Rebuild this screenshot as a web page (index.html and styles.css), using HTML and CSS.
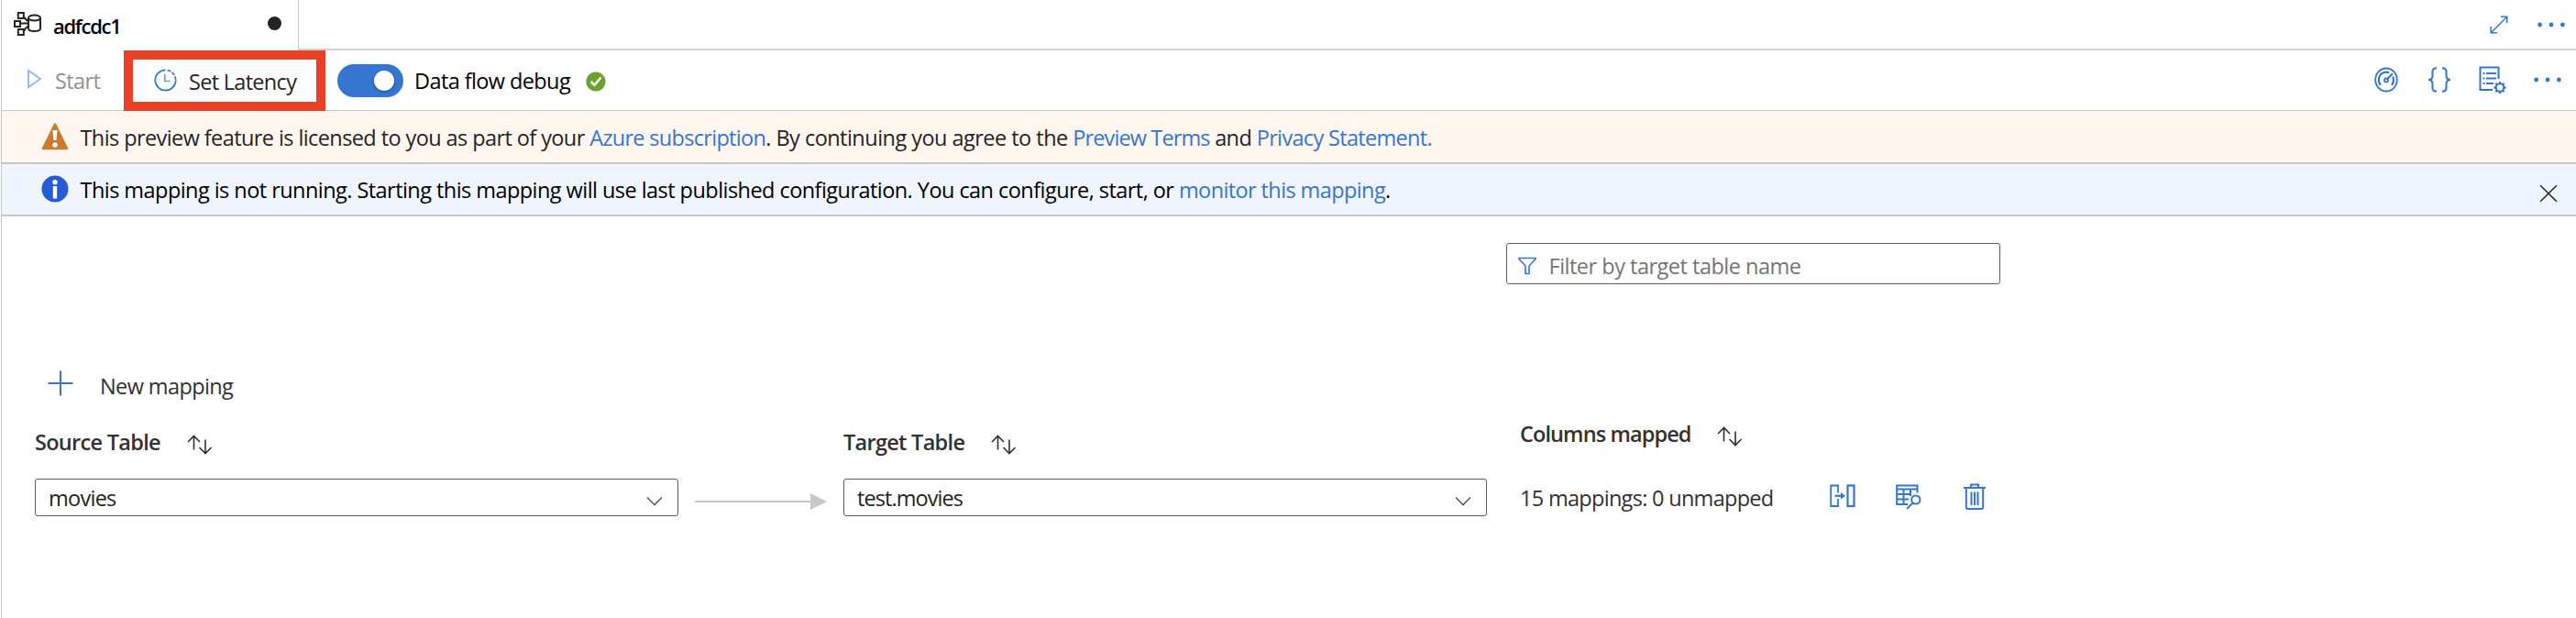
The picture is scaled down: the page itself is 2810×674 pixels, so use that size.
FILE: index.html
```html
<!DOCTYPE html>
<html lang="en">
<head>
<meta charset="utf-8">
<title>adfcdc1</title>
<link rel="stylesheet" href="styles.css">
</head>
<body>
<div class="app">
  <header class="tabs">
    <div class="tab">
      <svg class="tab-icon" width="30" height="28" viewBox="0 0 30 28" fill="none" stroke="#252423" stroke-width="2"><rect x="4.800" y="2" width="6" height="6"/><rect x="1" y="11" width="6" height="6"/><rect x="4.800" y="20" width="6" height="6"/><path d="M11 6.500C14 10 15 11 16 11M7 13.500H15M11 22C13 18 14 17 16 17"/><path d="M16 8V19C16 23 29 23 29 19V8"/><ellipse cx="22.500" cy="7.500" rx="6.500" ry="3"/></svg>
      <span class="t tab-name">adfcdc1</span>
      <span class="dirty"></span>
    </div>
    <div class="tab-tools">
      <svg width="20" height="20" viewBox="0 0 20 20" fill="none" stroke="#3476d0" stroke-width="1.500"><path d="M1.500 18.500L18.500 1.500M12 1.200H18.800V8M1.200 12V18.800H8"/></svg>
      <svg width="30" height="6" viewBox="0 0 30 6" fill="#3476d0"><circle cx="2.600" cy="3" r="2.400"/><circle cx="15" cy="3" r="2.400"/><circle cx="27.400" cy="3" r="2.400"/></svg>
    </div>
  </header>

  <div class="toolbar">
    <svg class="play" width="17" height="22" viewBox="0 0 17 22" fill="none" stroke="#98bbe9" stroke-width="2"><path d="M2 2V20L15 11Z"/></svg>
    <span class="t start">Start</span>
    <div class="latency">
      <svg width="25" height="25" viewBox="0 0 25 25" fill="none" stroke="#3476d0" stroke-width="1.700"><path d="M12.500 1.300A11.200 11.200 0 1 0 23.700 12.500"/><path d="M14.500 1.500A11.200 11.200 0 0 1 23.700 12.500" stroke-dasharray="4 1.600"/><path d="M11.800 6V13.500H17.500" stroke="#6e9fdf"/></svg>
      <span class="t set">Set Latency</span>
    </div>
    <span class="toggle"><span class="knob"></span></span>
    <span class="t debug">Data flow debug</span>
    <svg class="ok" width="22" height="22" viewBox="0 0 22 22"><circle cx="11" cy="11" r="10.600" fill="#6aa22e"/><path d="M5.500 11L9.500 14.800L16.500 6.500" fill="none" stroke="#fff" stroke-width="2.500"/></svg>
    <div class="tools">
      <svg class="gauge" width="26" height="28" viewBox="0 0 26 28" fill="none" stroke="#3476d0" stroke-width="1.800"><ellipse cx="13" cy="14" rx="11.800" ry="12.500"/><path d="M7 19.800C3 15 5 8 10 6.300C12 5.500 14 5.500 16 6.300M20.300 10.500C21.500 14 21 17 19 19.800" stroke-width="2.200"/><circle cx="13" cy="14.500" r="2"/><path d="M14.500 12.800L20 7.300" stroke-width="2.200"/></svg>
      <svg width="26" height="28" viewBox="0 0 26 28" fill="none" stroke="#3476d0" stroke-width="2"><path d="M10 1.200C6.500 1.200 5.500 2.500 5.500 5V9.500C5.500 12.500 4 14 1 14C4 14 5.500 15.500 5.500 18.500V23C5.500 25.500 6.500 26.800 10 26.800M16 1.200C19.500 1.200 20.500 2.500 20.500 5V9.500C20.500 12.500 22 14 25 14C22 14 20.500 15.500 20.500 18.500V23C20.500 25.500 19.500 26.800 16 26.800"/></svg>
      <svg width="30" height="30" viewBox="0 0 30 30" fill="none" stroke="#3476d0" stroke-width="2"><path d="M21.500 14V1.500H1.500V26H15"/><path d="M4.500 8H6.500M8 8H19M4.500 13.500H6.500M8 13.500H19M4.500 19H6.500M8 19H16"/><circle cx="23" cy="23.500" r="4.200"/><path d="M23 17V19.300M23 27.700V30M16.500 23.500H18.800M27.200 23.500H29.500M18.400 18.900L20 20.500M26 26.500L27.600 28.100M18.400 28.100L20 26.500M26 20.500L27.600 18.900" stroke-width="2.400"/></svg>
      <svg width="30" height="6" viewBox="0 0 30 6" fill="#3476d0"><circle cx="2.600" cy="3" r="2.400"/><circle cx="15" cy="3" r="2.400"/><circle cx="27.400" cy="3" r="2.400"/></svg>
    </div>
  </div>

  <div class="banner warning">
    <svg class="sign" width="30" height="30" viewBox="0 0 30 30"><path d="M15 1.500L28 28H2Z" fill="#cb7a2d" stroke="#cb7a2d" stroke-width="2.500" stroke-linejoin="round"/><path d="M12.400 8H17.600L16.500 19H13.500Z" fill="#fff"/><circle cx="15" cy="24" r="2.700" fill="#fff"/></svg>
    <p class="msg"><span class="t w1">This preview feature is licensed to you as part of your </span><a class="t w2">Azure subscription</a><span class="t w3">. By continuing you agree to the </span><a class="t w4">Preview Terms</a><span class="t w5"> and </span><a class="t w6">Privacy Statement.</a></p>
  </div>
  <div class="banner info">
    <svg class="sign" width="30" height="30" viewBox="0 0 30 30"><circle cx="15" cy="15" r="14.500" fill="#265cd3"/><circle cx="15" cy="7.700" r="2.700" fill="#fff"/><rect x="12.800" y="12" width="4.400" height="13.500" fill="#fff"/></svg>
    <p class="msg"><span class="t i1">This mapping is not running. Starting this mapping will use last published configuration. You can configure, start, or </span><a class="t i2">monitor this mapping</a><span class="t i3">.</span></p>
    <svg class="close" width="20" height="20" viewBox="0 0 20 20" fill="none" stroke="#252423" stroke-width="1.500"><path d="M1.200 1.200L18.800 18.800M18.800 1.200L1.200 18.800"/></svg>
  </div>

  <main class="content">
    <div class="filter">
      <svg width="20" height="20" viewBox="0 0 20 20" fill="none" stroke="#3476d0" stroke-width="1.600"><path d="M1 1.500H19V2.500L12 10V18.500H8V10L1 2.500Z"/></svg>
      <span class="t ph">Filter by target table name</span>
    </div>
    <div class="new">
      <svg class="plus" width="28" height="28" viewBox="0 0 28 28" fill="none" stroke="#3476d0" stroke-width="2"><path d="M14 .5V27.500M.5 14H27.500"/></svg>
      <span class="t newt">New mapping</span>
    </div>
    <div class="grid">
      <div class="head"><span class="t h1">Source Table</span><svg class="sort" width="28" height="22" viewBox="0 0 28 22"><path d="M7.500 1.500V16.500M1 8L7.500 1.500L14 8M20 5.500V20.500M13.500 14L20 20.500L26.500 14"/></svg></div>
      <div></div>
      <div class="head"><span class="t h2">Target Table</span><svg class="sort" width="28" height="22" viewBox="0 0 28 22"><path d="M7.500 1.500V16.500M1 8L7.500 1.500L14 8M20 5.500V20.500M13.500 14L20 20.500L26.500 14"/></svg></div>
      <div class="head mapped"><span class="t h3">Columns mapped</span><svg class="sort" width="28" height="22" viewBox="0 0 28 22"><path d="M7.500 1.500V16.500M1 8L7.500 1.500L14 8M20 5.500V20.500M13.500 14L20 20.500L26.500 14"/></svg></div>
      <div class="select"><span class="t s1">movies</span><svg class="chevron" width="18" height="11" viewBox="0 0 18 11"><path d="M1 1.500L9 9.500L17 1.500"/></svg></div>
      <div class="link"><svg width="144" height="18" viewBox="0 0 144 18" fill="#c8c8c8"><path d="M0 8H126V0L144 9L126 18V10H0Z"/></svg></div>
      <div class="select"><span class="t s2">test.movies</span><svg class="chevron" width="18" height="11" viewBox="0 0 18 11"><path d="M1 1.500L9 9.500L17 1.500"/></svg></div>
      <div class="actions">
        <span class="t count">15 mappings: 0 unmapped</span>
        <svg class="a1" width="28" height="26" viewBox="0 0 28 26" fill="none" stroke="#3476d0" stroke-width="1.800"><path d="M9 9.500V1.500H1.200V24H9V16"/><rect x="19.500" y="1.500" width="7" height="22.500" stroke-width="2.200"/><path d="M5.500 12.800H15" stroke-width="2.200"/><path d="M12 9L17 12.800L12 16.500Z" fill="#3476d0" stroke="none"/></svg>
        <svg class="a2" width="28" height="28" viewBox="0 0 28 28" fill="none" stroke="#3476d0" stroke-width="2"><path d="M23.500 9.500V1.500H1.200V22H13M1.200 5.500H24M1.200 11H17M1.200 16.500H14M8.500 5.500V22M16 5.500V13"/><circle cx="21.800" cy="17" r="4.600"/><path d="M18.500 20.500L12 27"/></svg>
        <svg class="a3" width="24" height="30" viewBox="0 0 24 30" fill="none" stroke="#3476d0" stroke-width="2"><path d="M0 5H24M8 5V1.500H16V5M2.800 5V26Q2.800 28 4.800 28H19.200Q21.200 28 21.200 26V5M8.500 9.500V24M12 9.500V24M15.500 9.500V24"/></svg>
      </div>
    </div>
  </main>
</div>
</body>
</html>
```
FILE: styles.css
```css
* { box-sizing: border-box; }
body { margin: 0; background: #fff; color: #323130; font: 23.5px/32px "Open Sans", "Noto Sans", sans-serif; }
svg { display: block; flex: none; }
.t { white-space: pre; letter-spacing: -.6px; }
.app { height: 674px; margin-left: 1px; border-left: 1px solid #c8c8c8; }

.tabs { display: flex; height: 55px; }
.tab { display: flex; align-items: flex-start; width: 324px; padding: 12px 0 0 13px; border-right: 1px solid #c8c8c8; color: #000; }
.tab-name { margin: 0 0 0 13px; font-size: 22px; font-weight: 600; letter-spacing: -1.3px; }
.dirty { width: 15px; height: 15px; margin: 6px 18px 0 auto; border-radius: 50%; background: #252423; }
.tab-tools { display: flex; flex: 1; justify-content: flex-end; align-items: center; gap: 32px; padding-right: 12px; border-bottom: 2px solid #d2d2d2; }

.toolbar { display: flex; align-items: center; height: 66px; border-bottom: 1px solid #c8c8c8; }
.play { margin: -3px 0 0 27px; }
.start { width: 60px; margin: 1px 0 0 14px; color: #929292; }
.latency { display: flex; align-items: center; gap: 13px; width: 220px; height: 66px; margin: -1px 0 -1px 15px; padding-left: 23px; border: 10px solid #eb4026; color: #252423; }
.set { margin-top: 2px; letter-spacing: -.7px; }
.toggle { width: 72px; height: 36px; margin-left: 13px; padding: 7px 10px; border-radius: 18px; background: #3476d0; }
.knob { display: block; width: 22px; height: 22px; margin-left: auto; border-radius: 50%; background: #fff; box-shadow: 0 1px 3px rgba(0,0,0,.4); }
.debug { width: 185px; margin: 1px 0 0 12px; color: #000; }
.ok { margin: 2px 0 0 2px; }
.tools { display: flex; align-items: center; gap: 30px; margin: -2px 0 0 auto; padding-right: 16px; }
.gauge { margin-right: 2px; }

.banner { display: flex; align-items: center; height: 58px; padding-left: 43px; border-bottom: 2px solid #c8c8c8; }
.sign { margin-top: -1px; }
.warning { background: #fff6f0; color: #252423; }
.info { height: 57px; background: #f0f5fd; color: #000; }
.msg { margin: 1px 0 0 12.5px; white-space: pre; }
.warning .msg { margin-top: 2px; }
.banner a { color: #3476d0; }
.w1 { letter-spacing: -.59px; }
.w2 { letter-spacing: -.69px; }
.w3 { letter-spacing: -.53px; }
.w4 { letter-spacing: -.88px; }
.w6 { letter-spacing: -.67px; }
.i1 { letter-spacing: -.55px; }
.close { margin: 9px 20px 0 auto; }

.filter { display: flex; align-items: center; width: 539px; height: 45px; margin: 29px 0 0 1641px; padding: 4px 0 0 12px; border: 1px solid #605e5c; border-radius: 3px; color: #757575; }
.ph { margin-left: 13.5px; letter-spacing: -.5px; }
.new { display: flex; align-items: center; height: 32px; margin: 94px 0 0 50px; }
.plus { margin-top: -4px; }
.newt { margin: 1px 0 0 29px; letter-spacing: -.6px; }
.grid { display: grid; grid-template-columns: 702px 180px 702px 560px; grid-template-rows: 56px 41px; margin: 30px 0 0 36px; }
.head { display: flex; align-items: flex-start; font-weight: 600; }
.head .t { letter-spacing: -.7px; }
.head .h3 { letter-spacing: -.9px; }
.mapped { margin-top: -9px; padding-left: 36px; }
.sort { margin: 8px 0 0 28.7px; fill: none; stroke: #323130; stroke-width: 1.6; }
.select { display: flex; align-items: center; justify-content: space-between; padding: 0 16px 0 14px; border: 1px solid #605e5c; border-radius: 3px; color: #252423; }
.s1 { letter-spacing: -.73px; }
.s2 { letter-spacing: -.93px; }
.chevron { margin-top: 8px; fill: none; stroke: #605e5c; stroke-width: 1.6; }
.link { display: flex; align-items: center; padding: 9px 0 0 18px; }
.actions { display: flex; align-items: center; padding-left: 36px; }
.count { letter-spacing: -.7px; }
.a1 { margin: -4px 0 0 61px; }
.a2 { margin: -1px 0 0 44px; }
.a3 { margin: -2px 0 0 46px; }
```
